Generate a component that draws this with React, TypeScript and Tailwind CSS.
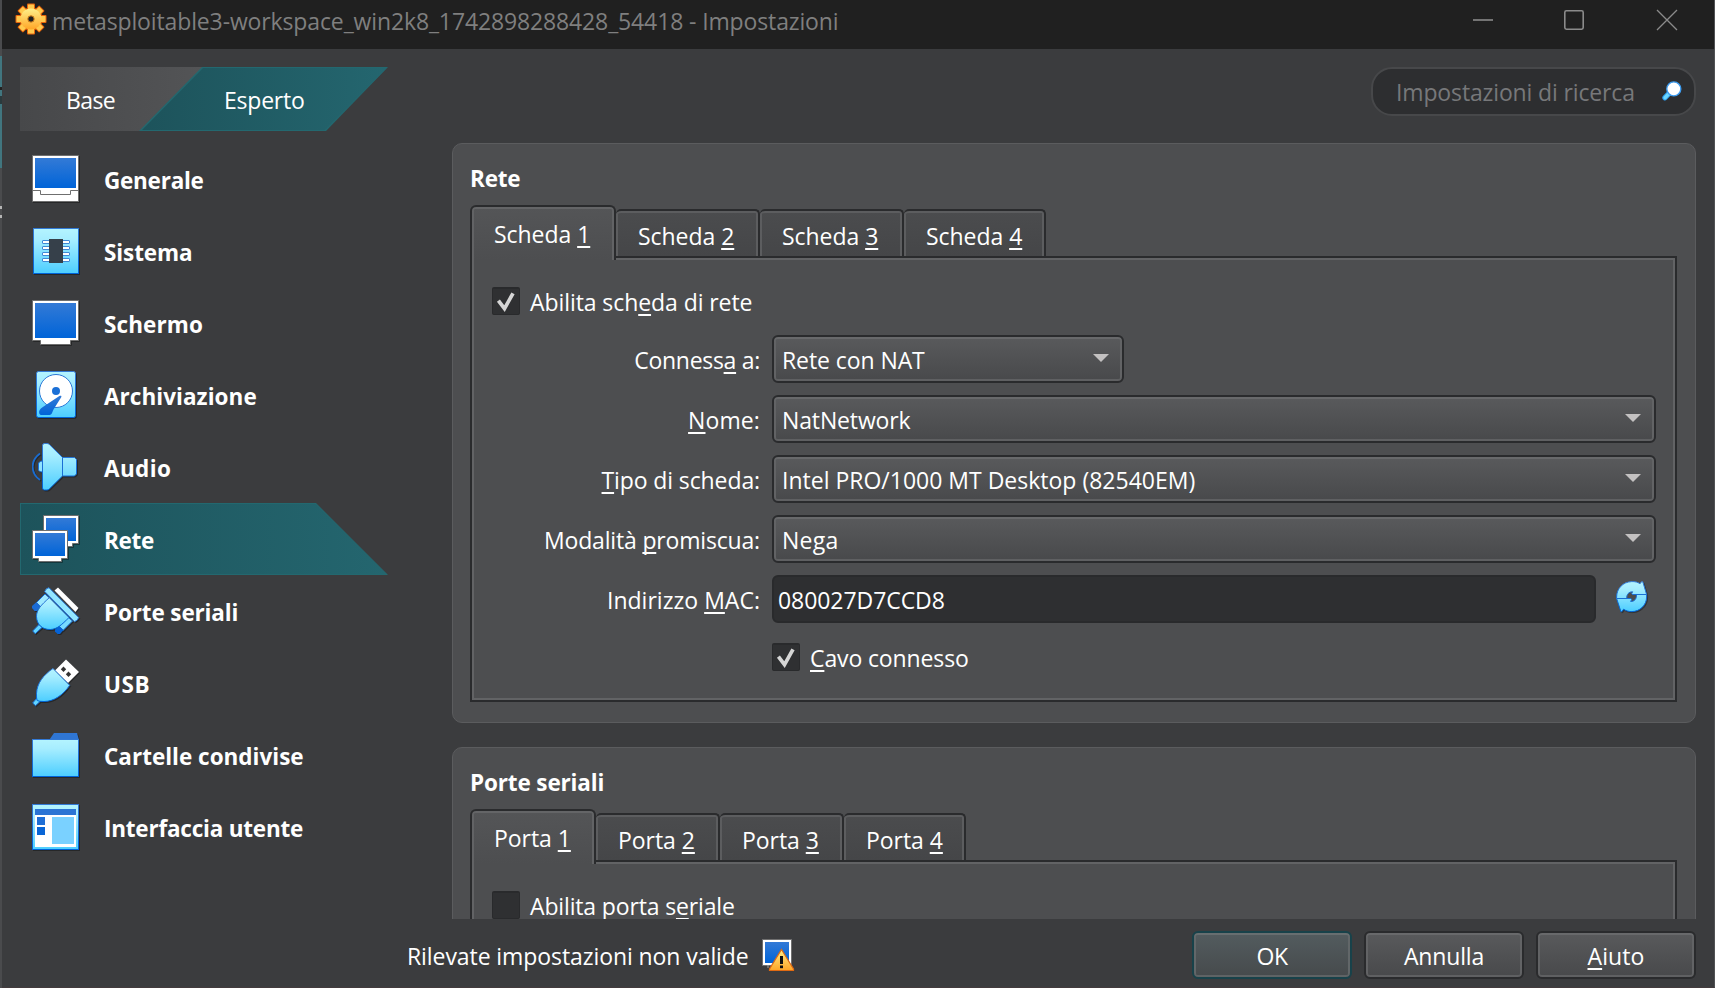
import React from 'react';

type Kids = { children?: React.ReactNode };

/* Mnemonic letter */
const U = ({ children }: Kids) => (
  <span className="underline decoration-2 underline-offset-[3px] [text-decoration-skip-ink:none]">{children}</span>
);

const Svg48 = ({ children }: Kids) => (
  <svg width="50" height="50" viewBox="0 0 50 50" className="block shrink-0 drop-shadow-[1px_1px_0px_rgba(0,0,0,0.35)]">
    {children}
  </svg>
);

const Defs = () => (
  <svg width="0" height="0" className="absolute">
    <defs>
      <linearGradient id="blue" x1="0" y1="0" x2="0" y2="1">
        <stop offset="0" stopColor="#337ad6" />
        <stop offset="1" stopColor="#0064d8" />
      </linearGradient>
      <linearGradient id="cyan" x1="0" y1="0" x2="0" y2="1">
        <stop offset="0" stopColor="#b4f4ff" />
        <stop offset="0.25" stopColor="#a6edff" />
        <stop offset="1" stopColor="#4cceff" />
      </linearGradient>
      <linearGradient id="edge" x1="0" y1="0" x2="0" y2="1">
        <stop offset="0" stopColor="#337ad6" />
        <stop offset="1" stopColor="#0064d8" />
      </linearGradient>
      <linearGradient id="gold" x1="0" y1="0" x2="0" y2="1">
        <stop offset="0" stopColor="#fff08a" />
        <stop offset="1" stopColor="#ffa526" />
      </linearGradient>
    </defs>
  </svg>
);

const IconGeneral = () => (
  <Svg48>
    <rect x="0.5" y="0.5" width="46" height="46" fill="#fff" stroke="#6f6f6f" />
    <rect x="3" y="3" width="41" height="30" fill="url(#blue)" />
    <path d="M0.5 35.5H8.5V39.5H38.5V35.5H46.5" fill="none" stroke="#6f6f6f" />
  </Svg48>
);

const IconSystem = () => (
  <Svg48>
    <rect x="1.5" y="1.5" width="45" height="45" fill="url(#cyan)" stroke="url(#edge)" />
    {[13.5, 19.5, 25.5, 31.5].map((y) => (
      <rect key={y} x="10.5" y={y} width="27" height="3" rx="0.5" fill="#fff" stroke="#3f8ad6" />
    ))}
    <rect x="17" y="12" width="14" height="24" fill="#36404a" />
  </Svg48>
);

const IconDisplay = () => (
  <Svg48>
    <path d="M0.5 1.5H46.5V41.5H38.5V45.5H8.5V41.5H0.5Z" fill="#fff" stroke="#6f6f6f" />
    <rect x="3" y="4" width="41" height="35" fill="url(#blue)" />
  </Svg48>
);

const IconStorage = () => (
  <Svg48>
    <rect x="4.5" y="0.5" width="39" height="46" rx="2" fill="url(#cyan)" stroke="url(#edge)" />
    <circle cx="24" cy="20" r="16.5" fill="#fff" stroke="#2a78d6" />
    <circle cx="24" cy="20" r="4" fill="#1a6fd6" />
    <path
      d="M29.2 26.2C30 24.8 28.8 24.2 27.4 25L10.5 36.2C8 37.8 6.7 40 7.2 42.2C7.6 43.6 8.6 44 10 44H16.5C18 44 19 43.4 19.8 42.4L21.5 38.5Z"
      fill="url(#blue)"
    />
  </Svg48>
);

const IconAudio = () => (
  <Svg48>
    <path d="M8 10.5C-1.8 17.5 -1.8 30 8 37" fill="none" stroke="#1a6cd0" strokeWidth="1.8" />
    <path d="M10.5 18C8 18 6.5 19.5 6.5 21V26.5C6.5 28 8 29 10.5 29Z" fill="#8fe3ff" stroke="#1a6fd6" />
    <path
      d="M10.5 2.5Q10.5 0.5 12.5 0.5H15Q16.3 0.5 17.3 1.4L30.5 14.5H42.5L44.5 16.5V31L42.5 33H30.5L17.3 46Q16.3 47 15 47H12.5Q10.5 47 10.5 45Z"
      fill="url(#cyan)"
      stroke="url(#edge)"
    />
    <path d="M30.5 14.5V33" stroke="#1a6fd6" />
  </Svg48>
);

const IconNetwork = () => (
  <Svg48>
    <path d="M11.5 0.5H46.5V28.5H40.5V31.5H17.5V28.5H11.5Z" fill="#fff" stroke="#6f6f6f" />
    <rect x="14" y="3" width="30" height="23" fill="url(#blue)" />
    <path d="M0.5 15.5H35.5V43.5H29.5V46.5H6.5V43.5H0.5Z" fill="#fff" stroke="#6f6f6f" />
    <rect x="3" y="18" width="30" height="23" fill="url(#blue)" />
  </Svg48>
);

const IconSerial = () => (
  <Svg48>
    <path d="M22.5 3.5L26 0.5L46.5 21L43.5 25Z" fill="#fff" />
    <path d="M13 7L17.5 11L8.5 20L4.5 15.5Z" fill="#9fe9ff" stroke="#1a6fd6" />
    <path d="M4.5 15L8.5 19.5L5 24H2.5L0 21V19Z" fill="#1a6cd6" />
    <path d="M36.5 30.5L40.5 34L31 43.5L27 39Z" fill="#78dbff" stroke="#1a6fd6" />
    <path d="M27 39L31.5 43L28 47H25.5L23 44.5V42.5Z" fill="#0663d6" />
    <path d="M0.7 44L7 37.5L10 40.5L3.2 46.7Z" fill="#62d5ff" stroke="#1a6fd6" />
    <path d="M17.3 10.7C9 18 4.4 23 4.5 29.5C4.6 37.5 10.5 42.8 18.5 42.5C25 42.2 29.5 38 37 30.5Z" fill="url(#cyan)" stroke="url(#edge)" />
    <path d="M12.7 4.5Q14 1 17 0.7L46.7 30.5Q46 33.5 42.5 34.7Z" fill="#93e6ff" stroke="#2a78d6" />
  </Svg48>
);

const IconUsb = () => (
  <Svg48>
    <path d="M34 0.5L47 13L36 24L23 11.5Z" fill="#fff" />
    <path d="M31.5 7.5L34.2 10.2L31.5 12.9L28.8 10.2ZM36.5 12.5L39.2 15.2L36.5 17.9L33.8 15.2Z" fill="#333" />
    <path d="M0.7 44L4.5 39.5L8 42.5L3.5 46.7Z" fill="#62d5ff" stroke="#1a6fd6" />
    <path d="M21 9.5L37.7 26.3C31 36 22 42.5 12 42.5Q7 42.6 5.2 41.5Q4.3 40 4.5 34.5C5 24 11.5 16 21 9.5Z" fill="url(#cyan)" stroke="url(#edge)" />
  </Svg48>
);

const IconFolder = () => (
  <Svg48>
    <path d="M17.5 8.5L22 2H45L47 9V12H17.5Z" fill="#2f76d4" />
    <rect x="0.5" y="8.5" width="46" height="37" fill="url(#cyan)" stroke="url(#edge)" />
  </Svg48>
);

const IconInterface = () => (
  <Svg48>
    <rect x="0.5" y="1.5" width="46" height="45" fill="url(#cyan)" stroke="url(#edge)" />
    <rect x="3" y="6" width="41" height="38" fill="#fff" />
    <rect x="3" y="6" width="41" height="6" fill="#2b74d4" />
    <rect x="5" y="14" width="8" height="8" fill="#1f6fd6" />
    <rect x="5" y="24" width="8" height="8" fill="#0865d6" />
    <rect x="20" y="14" width="22" height="27" fill="#7ad1ff" />
  </Svg48>
);

const IconGear = () => (
  <svg width="32" height="32" viewBox="-16 -16 32 32" className="block">
    <g fill="#e8640c">
      {[0, 45, 90, 135].map((a) => (
        <rect key={a} x="-4" y="-15.5" width="8" height="31" rx="1" transform={`rotate(${a})`} />
      ))}
      <circle r="11.6" />
    </g>
    <g fill="#ffca4e">
      {[0, 45, 90, 135].map((a) => (
        <rect key={a} x="-3" y="-14.5" width="6" height="29" rx="0.5" transform={`rotate(${a})`} />
      ))}
    </g>
    <circle r="10.6" fill="url(#gold)" />
    <circle r="3.2" fill="#202020" stroke="#d8841c" />
  </svg>
);

const IconSearch = () => (
  <svg width="20" height="20" viewBox="0 0 20 20" className="block shrink-0">
    <path d="M3 16.7L7.5 12" stroke="#2a9cf0" strokeWidth="5.4" strokeLinecap="round" />
    <path d="M3 16.7L7.5 12" stroke="#6ad6ff" strokeWidth="3.4" strokeLinecap="round" />
    <circle cx="11.8" cy="7.9" r="7" fill="#fff" stroke="#3d9cf0" strokeWidth="1.4" />
  </svg>
);

const IconRefresh = () => (
  <svg width="34" height="34" viewBox="0 0 34 34" className="block shrink-0 drop-shadow-[1px_1px_0px_rgba(0,0,0,0.35)]">
    <path
      d="M15.6 0.6C19 0.4 21.8 1.2 24 2.8L25.4 0.8H26.8L30.6 13.4V16C30.6 24 24 30.6 15.6 30.6C12.6 30.6 9.8 29.8 7.6 28.2L5.9 30.6H4.9L0.6 17.4V16C0.6 7.6 7 0.9 15.6 0.6Z"
      fill="url(#cyan)"
      stroke="url(#edge)"
    />
    <path d="M10.8 17.5C10.3 13.5 13 10.6 16.6 10.8L15.6 12.6L16.8 13.5H20.4C21 17.8 18.2 20.8 14.6 20.4L15.8 18.4L14.6 17.5Z" fill="#4b4c4e" stroke="#1a6fd6" />
    <path d="M0.8 17.5H15M16.2 13.5H30.4" stroke="#1a6fd6" />
  </svg>
);

const IconWarning = () => (
  <svg width="33" height="33" viewBox="0 0 33 33" className="block shrink-0">
    <path d="M0.5 0.5H29.5V26.5H6.5V28.5H5.5V26.5H0.5Z" fill="#fff" stroke="#6f6f6f" />
    <rect x="3" y="3" width="24" height="21" fill="url(#blue)" />
    <path d="M19.5 10.5L31.5 30V31.5H7.5V30Z" fill="url(#gold)" stroke="#e06a12" strokeWidth="1.2" />
    <rect x="18" y="17" width="3" height="8" fill="#111" />
    <rect x="18" y="26.5" width="3" height="2.7" fill="#111" />
  </svg>
);

const items = [
  { label: 'Generale', icon: <IconGeneral />, cls: 'tracking-[-0.25px]' },
  { label: 'Sistema', icon: <IconSystem />, cls: 'tracking-[-0.1px]' },
  { label: 'Schermo', icon: <IconDisplay />, cls: 'tracking-[0.1px]' },
  { label: 'Archiviazione', icon: <IconStorage />, cls: 'tracking-[0.05px]' },
  { label: 'Audio', icon: <IconAudio />, cls: 'tracking-[0.4px]' },
  { label: 'Rete', icon: <IconNetwork />, cls: 'tracking-[-0.3px]', active: true },
  { label: 'Porte seriali', icon: <IconSerial />, cls: 'tracking-[-0.14px]' },
  { label: 'USB', icon: <IconUsb />, cls: 'tracking-[0.5px]' },
  { label: 'Cartelle condivise', icon: <IconFolder />, cls: 'tracking-[0px]' },
  { label: 'Interfaccia utente', icon: <IconInterface />, cls: 'tracking-[-0.21px]' },
];

const Sidebar = () => (
  <nav className="w-[432px] shrink-0">
    {items.map((it) => (
      <div key={it.label} className="relative h-[72px] w-[368px]">
        {it.active && (
          <div className="absolute inset-0 bg-[#23686f] p-px [clip-path:polygon(0_0,296px_0,100%_100%,0_100%)]">
            <div className="h-full bg-linear-to-r from-[#1d535b] to-[#24666f] [clip-path:polygon(0_0,295px_0,100%_100%,0_100%)]" />
          </div>
        )}
        <div className="relative flex h-full pl-3 pt-3">
          {it.icon}
          <span className={`ml-[22px] mt-[2px] text-[22.5px] font-bold leading-[48px] ${it.cls}`}>{it.label}</span>
        </div>
      </div>
    ))}
  </nav>
);

const Check = ({ on }: { on?: boolean }) => (
  <span className="block size-7 shrink-0 rounded-[2px] border border-t-2 border-[#292a2c] bg-[#2f3032]">
    {on && (
      <svg width="26" height="25" viewBox="1 2 26 25" className="block">
        <path d="M6.4 13.6L12.5 21.6L21 6.3" fill="none" stroke="#d6d6d6" strokeWidth="3.7" />
      </svg>
    )}
  </span>
);

const box =
  'border-2 border-[#2a2b2d] bg-linear-to-b from-[#595a5c] to-[#48494b] rounded-[6px] shadow-[inset_0_2px_0_#68696b,inset_0_-2px_0_#5f6062,inset_2px_0_0_#626365,inset_-2px_0_0_#626365]';

const Combo = ({ children, className }: Kids & { className: string }) => (
  <div className={`flex h-12 items-center justify-between pb-px pl-2 pr-[13px] pt-[3px] ${box} ${className}`}>
    <span className="whitespace-nowrap">{children}</span>
    <svg width="16" height="8" viewBox="0 0 16 8" className="mb-[5px] block shrink-0">
      <path d="M0 0H16L8 8Z" fill="#c3c1c1" />
    </svg>
  </div>
);

const Row = ({ label, cls, children }: Kids & { label: React.ReactNode; cls: string }) => (
  <div className="flex h-12 items-center">
    <label className={`w-[286px] whitespace-nowrap pt-[2px] text-right ${cls}`}>{label}</label>
    <div className="ml-3 flex flex-1">{children}</div>
  </div>
);

const TabStrip = ({ word, first, rest, last, cls }: { word: string; first: string; rest: string; last: string; cls: string }) => (
  <div className="flex h-[50px] items-end">
    <div
      className={`relative z-10 -mb-[4px] h-[55px] shrink-0 rounded-t-[6px] border-2 border-b-0 border-[#2a2b2d] bg-linear-to-b from-[#545557] to-[#4d4e50] pl-[22px] pt-[11px] shadow-[inset_0_2px_0_#646567,inset_2px_0_0_#626365,inset_-2px_0_0_#626365] ${first} ${cls}`}
    >
      {word} <U>1</U>
    </div>
    {[2, 3, 4].map((n) => (
      <div
        key={n}
        className={`h-[47px] shrink-0 rounded-t-[5px] border-r-2 border-t-2 border-[#2a2b2d] bg-linear-to-b from-[#4b4c4e] to-[#454648] pl-[22px] pt-[9px] shadow-[inset_0_2px_0_#5c5d5f,inset_2px_0_0_#5c5d5f,inset_-2px_0_0_#5c5d5f] ${n === 4 ? last : rest} ${cls}`}
      >
        {word} <U>{n}</U>
      </div>
    ))}
  </div>
);

const Pane = ({ children, className }: Kids & { className: string }) => (
  <div className={`w-[1207px] border-2 border-[#2a2b2d] shadow-[inset_0_0_0_2px_#626365] ${className}`}>{children}</div>
);

const Panel = ({ title, children, className, cls }: Kids & { title: string; className: string; cls: string }) => (
  <section className={`shrink-0 rounded-[10px] border border-[#5b5c5e] bg-[#4d4e50] pl-[17px] ${className}`}>
    <h2 className={`h-[62px] pt-[19px] text-[22.5px] font-bold leading-[32px] ${cls}`}>{title}</h2>
    {children}
  </section>
);

export default function App() {
  return (
    <div className="flex h-[988px] w-[1715px] overflow-hidden bg-[#3b3c3e] font-['Open_Sans',sans-serif] text-[23px] leading-[32px] tracking-[-0.1px] text-white">
      <Defs />
      {/* Sliver of the window behind */}
      <div className="flex w-[2px] shrink-0 flex-col bg-[#4a4b4d]">
        <div className="mt-[56px] h-[31px] bg-[#41767f]" />
        <div className="h-[3px] bg-[#222]" />
        <div className="h-[6px] bg-[#41767f]" />
        <div className="h-[8px] bg-[#2a3a3d]" />
        <div className="h-[64px] bg-[#41767f]" />
        <div className="mt-[38px] h-[3px] bg-[#b5b5b5]" />
        <div className="mt-[6px] h-[3px] bg-[#b5b5b5]" />
      </div>

      <div className="flex min-w-0 flex-1 flex-col border-b border-r border-b-[#433b3d] border-r-[#515254]">
        <header className="flex h-[49px] shrink-0 bg-[#202020]">
          <div className="ml-[13px] mt-[3px]">
            <IconGear />
          </div>
          <h1 className="ml-[5px] mt-[5px] whitespace-nowrap tracking-[-0.13px] text-[#7f7f7f]">
            metasploitable3-workspace_win2k8_1742898288428_54418 - Impostazioni
          </h1>
          <svg width="206" height="22" viewBox="0 0 206 22" className="ml-auto mr-[36px] mt-[9px] block" fill="none" stroke="#8b8b8b" strokeWidth="1.6">
            <path d="M1 11H21" />
            <rect x="92.8" y="1.8" width="18.4" height="18.4" rx="1.6" />
            <path d="M185 1L205 21M205 1L185 21" strokeWidth="1.3" />
          </svg>
        </header>

        <div className="flex h-[94px] shrink-0 justify-between pl-[18px] pr-[18px] pt-[18px]">
          <div className="flex h-16">
            <div className="h-16 w-[183px] bg-linear-to-r from-[#47484a] to-[#535456] pl-[46px] pt-[17px] tracking-[-0.6px] [clip-path:polygon(0_0,183px_0,120px_100%,0_100%)]">
              Base
            </div>
            <div className="-ml-[64px] h-16 w-[249px] bg-[#23686f] pl-[2px] pt-px [clip-path:polygon(63px_0,100%_0,187px_100%,0_100%)]">
              <div className="h-[62px] w-[246px] bg-linear-to-r from-[#1d535b] to-[#24666f] pl-[83px] pt-[16px] tracking-[-0.22px] [clip-path:polygon(62px_0,100%_0,184px_100%,1px_100%)]">
                Esperto
              </div>
            </div>
          </div>
          <div className="flex h-[49px] w-[325px] justify-between rounded-[21px] border-2 border-[#47484a] bg-[#2d2e30] pl-[23px] pr-[12px] pt-[7px]">
            <span className="tracking-[-0.14px] text-[#77787a]">Impostazioni di ricerca</span>
            <span className="mt-[5px]">
              <IconSearch />
            </span>
          </div>
        </div>

        <div className="flex h-[776px] shrink-0 overflow-hidden pl-[18px] pr-[18px]">
          <Sidebar />
          <main className="flex flex-1 flex-col gap-6 overflow-hidden">
            <Panel title="Rete" className="h-[580px]" cls="tracking-[-0.2px]">
              <TabStrip word="Scheda" first="w-[146px]" rest="w-[144px]" last="w-[142px]" cls="tracking-[-0.05px]" />
              <Pane className="h-[446px] pl-[2px] pt-[29px]">
                <div className="flex h-7 pl-[18px]">
                  <Check on />
                  <span className="ml-[10px] mt-[-1px] tracking-[-0.08px]">
                    Abilita sch<U>e</U>da di rete
                  </span>
                </div>
                <div className="mt-5 flex flex-col gap-3">
                  <Row cls="tracking-[-0.3px]" label={<>Conness<U>a</U> a:</>}>
                    <Combo className="w-[352px] tracking-[-0.08px]">Rete con NAT</Combo>
                  </Row>
                  <Row cls="tracking-[0.1px]" label={<><U>N</U>ome:</>}>
                    <Combo className="w-[884px] tracking-[-0.14px]">NatNetwork</Combo>
                  </Row>
                  <Row cls="tracking-[-0.11px]" label={<><U>T</U>ipo di scheda:</>}>
                    <Combo className="w-[884px] tracking-[0px]">Intel PRO/1000 MT Desktop (82540EM)</Combo>
                  </Row>
                  <Row cls="tracking-[-0.17px]" label={<>Modalità <U>p</U>romiscua:</>}>
                    <Combo className="w-[884px] tracking-[0.3px]">Nega</Combo>
                  </Row>
                  <Row cls="tracking-[0.02px]" label={<>Indirizzo <U>M</U>AC:</>}>
                    <div className="flex h-12 w-[824px] items-center rounded-[6px] border-2 border-[#292a2c] bg-[#2e2f31] pl-1 pt-[2px] tracking-[-0.06px]">
                      080027D7CCD8
                    </div>
                    <div className="ml-5 mt-[6px]">
                      <IconRefresh />
                    </div>
                  </Row>
                </div>
                <div className="mt-5 flex h-7 pl-[298px]">
                  <Check on />
                  <span className="ml-[10px] mt-[-1px] tracking-[-0.12px]">
                    <U>C</U>avo connesso
                  </span>
                </div>
              </Pane>
            </Panel>

            <Panel title="Porte seriali" className="h-[400px]" cls="tracking-[-0.14px]">
              <TabStrip word="Porta" first="w-[126px]" rest="w-[124px]" last="w-[122px]" cls="tracking-[-0.05px]" />
              <Pane className="h-[260px] pl-[2px] pt-[29px]">
                <div className="flex h-7 pl-[18px]">
                  <Check />
                  <span className="ml-[10px] mt-[-1px] tracking-[-0.15px]">
                    Abilita porta s<U>e</U>riale
                  </span>
                </div>
              </Pane>
            </Panel>
          </main>
        </div>

        <footer className="flex flex-1 items-start pr-[18px] pt-3">
          <span className="ml-[405px] mt-[9px] w-[345px] whitespace-nowrap tracking-[-0.08px]">Rilevate impostazioni non valide</span>
          <div className="ml-[10px] mt-2">
            <IconWarning />
          </div>
          <div className="ml-auto flex gap-3 text-center">
            <button className="h-12 w-40 rounded-[6px] border-2 border-[#18424a] bg-linear-to-b from-[#535c5f] to-[#464a4c] pt-[2px] shadow-[inset_0_2px_0_#686e70,inset_0_-2px_0_#5f6365,inset_2px_0_0_#626769,inset_-2px_0_0_#626769] tracking-[-0.4px]">
              OK
            </button>
            <button className={`h-12 w-40 pt-[2px] tracking-[-0.16px] ${box}`}>Annulla</button>
            <button className={`h-12 w-40 pt-[2px] tracking-[0.1px] ${box}`}>
              <U>A</U>iuto
            </button>
          </div>
        </footer>
      </div>
    </div>
  );
}
